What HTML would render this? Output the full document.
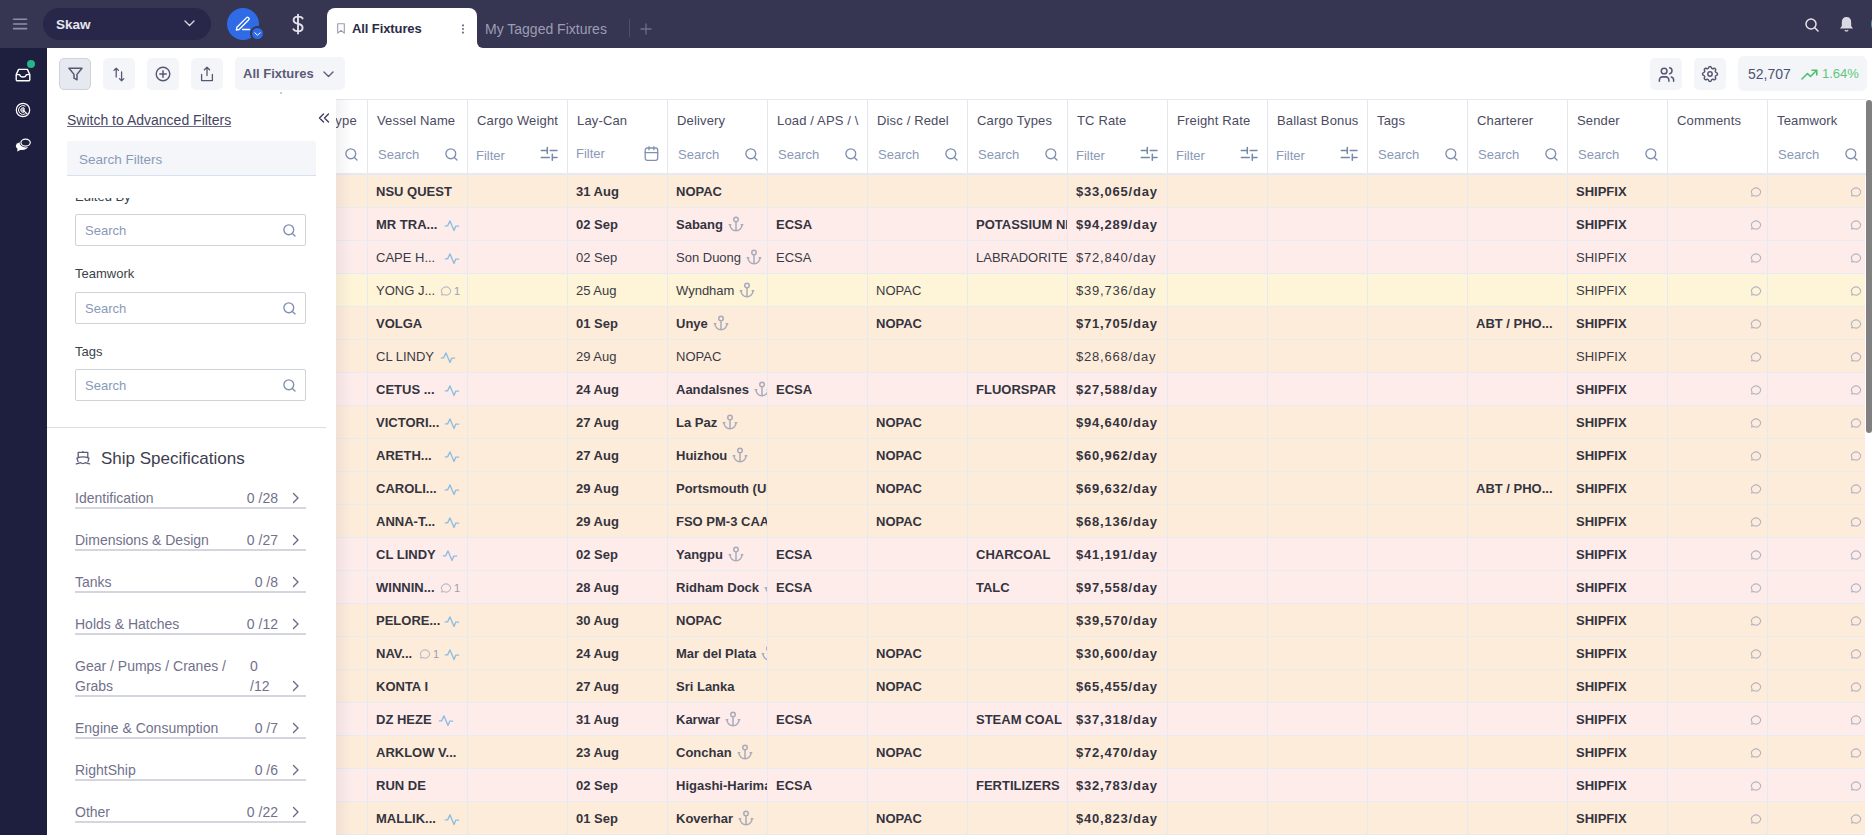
<!DOCTYPE html><html><head><meta charset="utf-8"><style>
*{box-sizing:border-box;margin:0;padding:0}
html,body{width:1872px;height:835px;overflow:hidden;background:#fff;font-family:"Liberation Sans", sans-serif;}
.abs{position:absolute}
.abs>svg,.tbtn>svg{display:block}
#top{position:absolute;left:0;top:0;width:1872px;height:48px;background:#363552}
#rail{position:absolute;left:0;top:48px;width:47px;height:787px;background:#1e1e3e}
.tbtn{position:absolute;top:58px;width:32px;height:32px;border-radius:5px;background:#f4f5f9;display:flex;align-items:center;justify-content:center}
.lbl{position:absolute;font-size:13px;color:#3c3f48;line-height:15px;white-space:nowrap}
.inp{position:absolute;left:75px;width:231px;height:32px;border:1px solid #cfd2d9;border-radius:2px;background:#fff}
.inp span{position:absolute;left:9px;top:8px;font-size:13px;line-height:15px;color:#8899b7}
.inp svg{position:absolute;right:9px;top:9px}
.spec{position:absolute;left:75px;width:231px;border-bottom:2px solid #d5d5df;font-size:14px;color:#72718c;line-height:20px}
.spec .n{position:absolute;right:28px;top:0;text-align:left}
.spec svg{position:absolute;right:5px}
#tbl{position:absolute;left:336px;top:99px;width:1530px;height:736px;overflow:hidden}
.hdr{position:absolute;left:0;top:0;width:1530px;height:76px;border-top:1px solid #e6e9f0;border-bottom:2px solid #e6e9f0;background:#fff}
.hc{position:absolute;top:0;height:73px;border-left:1px solid #e3e7ee}
.hc .t{position:absolute;left:9px;top:13px;font-size:13px;line-height:15px;color:#4b4b5f;white-space:nowrap;letter-spacing:0.15px}
.hc .p{position:absolute;left:10px;top:47px;font-size:13px;line-height:15px;color:#8a99b6;white-space:nowrap}
.hc svg{position:absolute}
.row{position:absolute;left:0;width:1529px;height:33px;border-bottom:1px solid #e8ebf0}
.o{background:#feecdb}
.k{background:#feeceb}
.y{background:#fef4d8}
.c{position:absolute;top:0;height:32px;border-left:1px solid #e6e9ef;overflow:hidden;white-space:nowrap;font-size:13px;line-height:34px;color:#3a3a44;padding-left:8px}
.b .c{font-weight:700;color:#34343e}
.c svg{vertical-align:middle}
.money{letter-spacing:0.8px}
</style></head><body><div id="top"><div class="abs" style="left:12px;top:17px"><svg width="16" height="14" viewBox="0 0 16 14" ><path d="M1.6 2.2H14.6 M1.6 7H14.6 M1.6 11.6H14.6" stroke="#8f8ea8" stroke-width="1.6" stroke-linecap="round"/></svg></div><div class="abs" style="left:43px;top:8px;width:168px;height:32px;border-radius:16px;background:#28274a"></div><div class="abs" style="left:56px;top:17px;font-size:13.5px;font-weight:700;color:#e6e6ee;line-height:16px">Skaw</div><div class="abs" style="left:184px;top:20px"><svg width="11" height="7" viewBox="0 0 11 7" ><path d="M1 1 L5.5 5.5 L10 1" fill="none" stroke="#d6d6e2" stroke-width="1.4" stroke-linecap="round" stroke-linejoin="round"/></svg></div><div class="abs" style="left:227px;top:8px;width:32px;height:32px;border-radius:16px;background:#306be6"></div><div class="abs" style="left:234px;top:15px"><svg width="18" height="18" viewBox="0 0 18 18" ><path d="M2.4 15 L2.9 12.3 L12.6 2.6 A1.3 1.3 0 0 1 14.4 2.6 L14.8 3 A1.3 1.3 0 0 1 14.8 4.8 L5.1 14.5 Z M8.6 14.5 H15.6" fill="none" stroke="#ffffff" stroke-width="1.3" stroke-linejoin="round" stroke-linecap="round"/></svg></div><div class="abs" style="left:250px;top:26px;width:15px;height:15px;border-radius:8px;background:#306be6;border:2px solid #363552"></div><div class="abs" style="left:254px;top:32px"><svg width="7" height="4" viewBox="0 0 7 4" ><path d="M0.8 0.8 L3.5 3.2 L6.2 0.8" fill="none" stroke="#fff" stroke-width="1" stroke-linecap="round"/></svg></div><div class="abs" style="left:291px;top:13px"><svg width="14" height="22" viewBox="0 0 14 22" ><path d="M7 1.6V20.6 M11.6 5.4 Q10.6 3.6 7.2 3.6 Q2.6 3.6 2.6 7 Q2.6 9.8 7 10.8 Q11.6 11.8 11.6 14.7 Q11.6 18.2 7 18.2 Q3.6 18.2 2.4 16.2" fill="none" stroke="#e2e2ea" stroke-width="1.9" stroke-linecap="round"/></svg></div></div><div class="abs" style="left:321px;top:42px;width:6px;height:6px;background:#fff"></div><div class="abs" style="left:315px;top:36px;width:12px;height:12px;border-radius:0 0 6px 0;background:#363552"></div><div class="abs" style="left:477px;top:42px;width:6px;height:6px;background:#fff"></div><div class="abs" style="left:477px;top:36px;width:12px;height:12px;border-radius:0 0 0 6px;background:#363552"></div><div class="abs" style="left:327px;top:8px;width:150px;height:41px;border-radius:8px 8px 0 0;background:#fff"></div><div class="abs" style="left:337px;top:23px"><svg width="8" height="11" viewBox="0 0 8 11" ><path d="M0.7 0.7H7.3V10.2L4 7.4L0.7 10.2Z" fill="none" stroke="#9a9aae" stroke-width="1.1" stroke-linejoin="round"/></svg></div><div class="abs" style="left:352px;top:21px;font-size:13px;font-weight:700;color:#2c2c46;line-height:16px;letter-spacing:-0.1px">All Fixtures</div><div class="abs" style="left:461px;top:24px"><svg width="4" height="10" viewBox="0 0 4 10" ><circle cx="2" cy="1.4" r="1.1" fill="#6b7890"/><circle cx="2" cy="5" r="1.1" fill="#6b7890"/><circle cx="2" cy="8.6" r="1.1" fill="#6b7890"/></svg></div><div class="abs" style="left:485px;top:21px;font-size:14px;color:#9d9db4;line-height:16px">My Tagged Fixtures</div><div class="abs" style="left:629px;top:19px;width:1px;height:18px;background:#4f4e6a"></div><div class="abs" style="left:640px;top:23px"><svg width="12" height="12" viewBox="0 0 12 12" ><path d="M6 1V11 M1 6H11" stroke="#6f6e88" stroke-width="1.3" stroke-linecap="round"/></svg></div><div class="abs" style="left:1805px;top:18px"><svg width="14" height="14" viewBox="0 0 14 14" ><circle cx="6" cy="6" r="5" fill="none" stroke="#e3e3ea" stroke-width="1.5"/><path d="M9.8 9.8 L13 13" stroke="#e3e3ea" stroke-width="1.5" stroke-linecap="round"/></svg></div><div class="abs" style="left:1839px;top:16px"><svg width="15" height="16" viewBox="0 0 15 16" ><path d="M7.5 1 Q12.2 1 12.2 6.5 V10 L14 12.4 H1 L2.8 10 V6.5 Q2.8 1 7.5 1 Z" fill="#d9d9e2"/><path d="M5.8 14.2 Q7.5 15.6 9.2 14.2" stroke="#d9d9e2" stroke-width="1.2" fill="none"/></svg></div><div class="abs" style="left:1871px;top:13px;width:22px;height:22px;border-radius:11px;background:#5b98a2"></div><div id="rail"></div><div class="abs" style="left:15px;top:68px"><svg width="16" height="14" viewBox="0 0 16 14" ><path d="M1.2 6.6 L3.6 1.4 H12.4 L14.8 6.6 V11.6 A1.2 1.2 0 0 1 13.6 12.8 H2.4 A1.2 1.2 0 0 1 1.2 11.6 Z M1.2 6.6 H4.6 Q5.2 9 8 9 Q10.8 9 11.4 6.6 H14.8" fill="none" stroke="#fff" stroke-width="1.4" stroke-linejoin="round"/></svg></div><div class="abs" style="left:27px;top:60px;width:8px;height:8px;border-radius:4px;background:#25b48b"></div><div class="abs" style="left:15px;top:102px"><svg width="16" height="16" viewBox="0 0 16 16" ><circle cx="8" cy="8" r="6.7" fill="none" stroke="#fff" stroke-width="1.2"/><path d="M10.5 4.27 A4.5 4.5 0 1 0 10.58 11.69" fill="none" stroke="#fff" stroke-width="1"/><path d="M9.15 6 A2.3 2.3 0 1 0 9.15 10 Z" fill="#8a8aa6" stroke="#fff" stroke-width="0.9"/><path d="M8 8 L11.9 11.7" stroke="#fff" stroke-width="1.1" stroke-linecap="round"/></svg></div><div class="abs" style="left:15px;top:137px"><svg width="18" height="16" viewBox="0 0 18 16" ><ellipse cx="7" cy="9" rx="6.2" ry="4" fill="#fff"/><path d="M2.6 11 L2.2 14.6 L6.4 12.6 Z" fill="#fff"/><ellipse cx="10.6" cy="5.6" rx="4.7" ry="3.5" fill="#1e1e3e" stroke="#1e1e3e" stroke-width="2.6"/><ellipse cx="10.6" cy="5.6" rx="4.7" ry="3.5" fill="#1e1e3e" stroke="#fff" stroke-width="1.2"/></svg></div><div class="tbtn" style="left:59px;background:#e6e9ef;border:1px solid #cdd2dc"><svg width="15" height="14" viewBox="0 0 15 14" ><path d="M1 1.2 H14 L9 7.4 V12.8 L6 11.2 V7.4 Z" fill="none" stroke="#585773" stroke-width="1.5" stroke-linejoin="round"/></svg></div><div class="tbtn" style="left:103px"><svg width="14" height="15" viewBox="0 0 14 15" ><path d="M4.2 10 V1.2 M2 3.4 L4.2 1.2 L6.4 3.4 M9.6 5 V13.8 M7.4 11.6 L9.6 13.8 L11.8 11.6" fill="none" stroke="#585773" stroke-width="1.3" stroke-linecap="round" stroke-linejoin="round"/></svg></div><div class="tbtn" style="left:147px"><svg width="16" height="16" viewBox="0 0 16 16" ><circle cx="8" cy="8" r="6.8" fill="none" stroke="#585773" stroke-width="1.4"/><path d="M8 4.8 V11.2 M4.8 8 H11.2" stroke="#585773" stroke-width="1.5" stroke-linecap="round"/></svg></div><div class="tbtn" style="left:191px"><svg width="14" height="16" viewBox="0 0 14 16" ><path d="M7 9.5 V1.2 M4.4 3.8 L7 1.2 L9.6 3.8 M1.6 8.4 V14.6 H12.4 V8.4" fill="none" stroke="#585773" stroke-width="1.3" stroke-linecap="round" stroke-linejoin="round"/></svg></div><div class="abs" style="left:235px;top:57px;width:110px;height:33px;border-radius:5px;background:#f4f5f9"></div><div class="abs" style="left:243px;top:66px;font-size:13px;font-weight:700;color:#5c5b78;line-height:16px">All Fixtures</div><div class="abs" style="left:323px;top:71px"><svg width="11" height="7" viewBox="0 0 11 7" ><path d="M1 1 L5.5 5.5 L10 1" fill="none" stroke="#5c5b78" stroke-width="1.4" stroke-linecap="round" stroke-linejoin="round"/></svg></div><div class="tbtn" style="left:1650px"><svg width="19" height="19" viewBox="0 0 24 24" style="display:block;margin-left:1px"><g fill="none" stroke="#585773" stroke-width="1.9" stroke-linecap="round" stroke-linejoin="round"><circle cx="9" cy="7.6" r="3.6"/><path d="M3 20.5v-1.5a4 4 0 0 1 4 -4h4a4 4 0 0 1 4 4v1.5"/><path d="M16 3.6a3.8 3.8 0 0 1 0 7.4"/><path d="M21 20.5v-1.5a4 4 0 0 0 -3 -3.85"/></g></svg></div><div class="tbtn" style="left:1694px"><svg width="20" height="20" viewBox="0 0 24 24" style="display:block"><g fill="none" stroke="#585773" stroke-width="1.8" stroke-linecap="round" stroke-linejoin="round"><path d="M10.325 4.317c.426 -1.756 2.924 -1.756 3.35 0a1.724 1.724 0 0 0 2.573 1.066c1.543 -.94 3.31 .826 2.37 2.37a1.724 1.724 0 0 0 1.065 2.572c1.756 .426 1.756 2.924 0 3.35a1.724 1.724 0 0 0 -1.066 2.573c.94 1.543 -.826 3.31 -2.37 2.37a1.724 1.724 0 0 0 -2.572 1.065c-.426 1.756 -2.924 1.756 -3.35 0a1.724 1.724 0 0 0 -2.573 -1.066c-1.543 .94 -3.31 -.826 -2.37 -2.37a1.724 1.724 0 0 0 -1.065 -2.572c-1.756 -.426 -1.756 -2.924 0 -3.35a1.724 1.724 0 0 0 1.066 -2.573c-.94 -1.543 .826 -3.31 2.37 -2.37c1 .608 2.296 .07 2.572 -1.065z"/><circle cx="12" cy="12" r="2.6"/></g></svg></div><div class="abs" style="left:1738px;top:56px;width:129px;height:35px;border-radius:6px;background:#f4f5f9"></div><div class="abs" style="left:1748px;top:66px;font-size:14px;color:#4d5272;line-height:16px">52,707</div><div class="abs" style="left:1801px;top:69px"><svg width="17" height="11" viewBox="0 0 17 11" ><path d="M1 10 L6.5 4.5 L9.5 7.5 L15.5 1.5 M11 1.2 H15.8 V6" fill="none" stroke="#4fc16e" stroke-width="1.6" stroke-linecap="round" stroke-linejoin="round"/></svg></div><div class="abs" style="left:1822px;top:66px;font-size:13px;color:#5cc77b;line-height:16px">1.64%</div><div class="abs" style="left:280px;top:92px;width:2px;height:2px;border-radius:1px;background:#b9bac4"></div><div class="abs" style="left:67px;top:112px;font-size:14px;color:#454462;line-height:16px;text-decoration:underline;text-underline-offset:1px;text-decoration-color:#6a6985">Switch to Advanced Filters</div><div class="abs" style="left:318px;top:113px"><svg width="12" height="10" viewBox="0 0 12 10" ><path d="M5.5 1 L1.5 5 L5.5 9 M10.5 1 L6.5 5 L10.5 9" fill="none" stroke="#3e3d5a" stroke-width="1.4" stroke-linecap="round" stroke-linejoin="round"/></svg></div><div class="abs" style="left:67px;top:141px;width:249px;height:35px;background:#f4f6fa;border-bottom:1px solid #d5e1ee;border-radius:3px 3px 0 0"></div><div class="abs" style="left:79px;top:152px;font-size:13.5px;color:#8a9bb8;line-height:16px">Search Filters</div><div class="abs" style="left:47px;top:198px;width:289px;height:637px;overflow:hidden"><div class="lbl" style="left:28px;top:-9px">Edited By</div></div><div class="inp" style="top:214px"><span>Search</span><svg width="13" height="13" viewBox="0 0 13 13" ><circle cx="5.8" cy="5.8" r="4.9" fill="none" stroke="#7f8fb0" stroke-width="1.35"/><path d="M9.4 9.4 L12 12" stroke="#7f8fb0" stroke-width="1.35" stroke-linecap="round"/></svg></div><div class="inp" style="top:292px"><span>Search</span><svg width="13" height="13" viewBox="0 0 13 13" ><circle cx="5.8" cy="5.8" r="4.9" fill="none" stroke="#7f8fb0" stroke-width="1.35"/><path d="M9.4 9.4 L12 12" stroke="#7f8fb0" stroke-width="1.35" stroke-linecap="round"/></svg></div><div class="inp" style="top:369px"><span>Search</span><svg width="13" height="13" viewBox="0 0 13 13" ><circle cx="5.8" cy="5.8" r="4.9" fill="none" stroke="#7f8fb0" stroke-width="1.35"/><path d="M9.4 9.4 L12 12" stroke="#7f8fb0" stroke-width="1.35" stroke-linecap="round"/></svg></div><div class="lbl" style="left:75px;top:266px">Teamwork</div><div class="lbl" style="left:75px;top:344px">Tags</div><div class="abs" style="left:47px;top:427px;width:279px;height:1px;background:#dcdce4"></div><div class="abs" style="left:75px;top:449px"><svg width="16" height="16" viewBox="0 0 16 16" ><path d="M7.9 2.3 V3.2 M3.2 8 V3.3 H12.8 V8 M2 9.2 Q7.9 6.6 13.9 9.2 M2 9.2 L3 12.6 M13.9 9.2 L13 12.6 M1.3 14.9 Q3.4 14.6 5.4 13.6 Q7.9 15.6 10.5 13.6 Q12.5 14.6 14.6 14.9" fill="none" stroke="#5b5b7b" stroke-width="1.3" stroke-linejoin="round" stroke-linecap="round"/></svg></div><div class="abs" style="left:101px;top:449px;font-size:17px;color:#3d3d50;line-height:20px">Ship Specifications</div><div class="spec" style="top:488px;height:21px">Identification<span class="n">0 /28</span><span style="position:absolute;right:1px;top:4px;line-height:0"><svg width="8" height="12" viewBox="0 0 8 12" ><path d="M1.5 1.5 L6 6 L1.5 10.5" fill="none" stroke="#6b6b86" stroke-width="1.4" stroke-linecap="round" stroke-linejoin="round"/></svg></span></div><div class="spec" style="top:530px;height:21px">Dimensions &amp; Design<span class="n">0 /27</span><span style="position:absolute;right:1px;top:4px;line-height:0"><svg width="8" height="12" viewBox="0 0 8 12" ><path d="M1.5 1.5 L6 6 L1.5 10.5" fill="none" stroke="#6b6b86" stroke-width="1.4" stroke-linecap="round" stroke-linejoin="round"/></svg></span></div><div class="spec" style="top:572px;height:21px">Tanks<span class="n">0 /8</span><span style="position:absolute;right:1px;top:4px;line-height:0"><svg width="8" height="12" viewBox="0 0 8 12" ><path d="M1.5 1.5 L6 6 L1.5 10.5" fill="none" stroke="#6b6b86" stroke-width="1.4" stroke-linecap="round" stroke-linejoin="round"/></svg></span></div><div class="spec" style="top:614px;height:21px">Holds &amp; Hatches<span class="n">0 /12</span><span style="position:absolute;right:1px;top:4px;line-height:0"><svg width="8" height="12" viewBox="0 0 8 12" ><path d="M1.5 1.5 L6 6 L1.5 10.5" fill="none" stroke="#6b6b86" stroke-width="1.4" stroke-linecap="round" stroke-linejoin="round"/></svg></span></div><div class="spec" style="top:656px;height:41px">Gear / Pumps / Cranes /<br>Grabs<span class="n" style="right:auto;left:175px">0</span><span class="n" style="top:20px;right:auto;left:175px">/12</span><span style="position:absolute;right:1px;top:24px;line-height:0"><svg width="8" height="12" viewBox="0 0 8 12" ><path d="M1.5 1.5 L6 6 L1.5 10.5" fill="none" stroke="#6b6b86" stroke-width="1.4" stroke-linecap="round" stroke-linejoin="round"/></svg></span></div><div class="spec" style="top:718px;height:21px">Engine &amp; Consumption<span class="n">0 /7</span><span style="position:absolute;right:1px;top:4px;line-height:0"><svg width="8" height="12" viewBox="0 0 8 12" ><path d="M1.5 1.5 L6 6 L1.5 10.5" fill="none" stroke="#6b6b86" stroke-width="1.4" stroke-linecap="round" stroke-linejoin="round"/></svg></span></div><div class="spec" style="top:760px;height:21px">RightShip<span class="n">0 /6</span><span style="position:absolute;right:1px;top:4px;line-height:0"><svg width="8" height="12" viewBox="0 0 8 12" ><path d="M1.5 1.5 L6 6 L1.5 10.5" fill="none" stroke="#6b6b86" stroke-width="1.4" stroke-linecap="round" stroke-linejoin="round"/></svg></span></div><div class="spec" style="top:802px;height:21px">Other<span class="n">0 /22</span><span style="position:absolute;right:1px;top:4px;line-height:0"><svg width="8" height="12" viewBox="0 0 8 12" ><path d="M1.5 1.5 L6 6 L1.5 10.5" fill="none" stroke="#6b6b86" stroke-width="1.4" stroke-linecap="round" stroke-linejoin="round"/></svg></span></div><div id="tbl"><div class="hdr"><div class="hc" style="left:0px;width:31px;border-left:none"><div class="t" style="left:-8px">Type</div><div style="position:absolute;left:9px;top:48px;line-height:0"><svg width="13" height="13" viewBox="0 0 13 13" ><circle cx="5.8" cy="5.8" r="4.9" fill="none" stroke="#7f8fb0" stroke-width="1.35"/><path d="M9.4 9.4 L12 12" stroke="#7f8fb0" stroke-width="1.35" stroke-linecap="round"/></svg></div></div><div class="hc" style="left:31px;width:100px"><div class="t">Vessel Name</div><div class="p" style="left:10px">Search</div><div style="position:absolute;left:77px;top:48px;line-height:0"><svg width="13" height="13" viewBox="0 0 13 13" ><circle cx="5.8" cy="5.8" r="4.9" fill="none" stroke="#7f8fb0" stroke-width="1.35"/><path d="M9.4 9.4 L12 12" stroke="#7f8fb0" stroke-width="1.35" stroke-linecap="round"/></svg></div></div><div class="hc" style="left:131px;width:100px"><div class="t">Cargo Weight</div><div class="p" style="left:8px;top:48px">Filter</div><div style="position:absolute;left:72px;top:46px;line-height:0"><svg width="18" height="15" viewBox="0 0 18 15" ><path d="M1.3 4.6H7.3 M7.3 1.4V7.5 M10.2 4.6H17 M1.3 11.4H9.4 M12.3 8.2V14.2 M12.3 11.4H17" stroke="#7488aa" stroke-width="1.5" fill="none" stroke-linecap="round"/></svg></div></div><div class="hc" style="left:231px;width:100px"><div class="t">Lay-Can</div><div class="p" style="left:8px;top:45.5px">Filter</div><div style="position:absolute;left:75.5px;top:46px;line-height:0"><svg width="15" height="15" viewBox="0 0 15 15" ><rect x="1.2" y="2" width="12.5" height="12.3" rx="2" fill="none" stroke="#7f92b0" stroke-width="1.3"/><path d="M1.2 6.7H13.7 M5 0.7V3.8 M9.9 0.7V3.8" stroke="#7f92b0" stroke-width="1.3" stroke-linecap="round"/></svg></div></div><div class="hc" style="left:331px;width:100px"><div class="t">Delivery</div><div class="p" style="left:10px">Search</div><div style="position:absolute;left:77px;top:48px;line-height:0"><svg width="13" height="13" viewBox="0 0 13 13" ><circle cx="5.8" cy="5.8" r="4.9" fill="none" stroke="#7f8fb0" stroke-width="1.35"/><path d="M9.4 9.4 L12 12" stroke="#7f8fb0" stroke-width="1.35" stroke-linecap="round"/></svg></div></div><div class="hc" style="left:431px;width:100px"><div class="t">Load / APS / \</div><div class="p" style="left:10px">Search</div><div style="position:absolute;left:77px;top:48px;line-height:0"><svg width="13" height="13" viewBox="0 0 13 13" ><circle cx="5.8" cy="5.8" r="4.9" fill="none" stroke="#7f8fb0" stroke-width="1.35"/><path d="M9.4 9.4 L12 12" stroke="#7f8fb0" stroke-width="1.35" stroke-linecap="round"/></svg></div></div><div class="hc" style="left:531px;width:100px"><div class="t">Disc / Redel</div><div class="p" style="left:10px">Search</div><div style="position:absolute;left:77px;top:48px;line-height:0"><svg width="13" height="13" viewBox="0 0 13 13" ><circle cx="5.8" cy="5.8" r="4.9" fill="none" stroke="#7f8fb0" stroke-width="1.35"/><path d="M9.4 9.4 L12 12" stroke="#7f8fb0" stroke-width="1.35" stroke-linecap="round"/></svg></div></div><div class="hc" style="left:631px;width:100px"><div class="t">Cargo Types</div><div class="p" style="left:10px">Search</div><div style="position:absolute;left:77px;top:48px;line-height:0"><svg width="13" height="13" viewBox="0 0 13 13" ><circle cx="5.8" cy="5.8" r="4.9" fill="none" stroke="#7f8fb0" stroke-width="1.35"/><path d="M9.4 9.4 L12 12" stroke="#7f8fb0" stroke-width="1.35" stroke-linecap="round"/></svg></div></div><div class="hc" style="left:731px;width:100px"><div class="t">TC Rate</div><div class="p" style="left:8px;top:48px">Filter</div><div style="position:absolute;left:72px;top:46px;line-height:0"><svg width="18" height="15" viewBox="0 0 18 15" ><path d="M1.3 4.6H7.3 M7.3 1.4V7.5 M10.2 4.6H17 M1.3 11.4H9.4 M12.3 8.2V14.2 M12.3 11.4H17" stroke="#7488aa" stroke-width="1.5" fill="none" stroke-linecap="round"/></svg></div></div><div class="hc" style="left:831px;width:100px"><div class="t">Freight Rate</div><div class="p" style="left:8px;top:48px">Filter</div><div style="position:absolute;left:72px;top:46px;line-height:0"><svg width="18" height="15" viewBox="0 0 18 15" ><path d="M1.3 4.6H7.3 M7.3 1.4V7.5 M10.2 4.6H17 M1.3 11.4H9.4 M12.3 8.2V14.2 M12.3 11.4H17" stroke="#7488aa" stroke-width="1.5" fill="none" stroke-linecap="round"/></svg></div></div><div class="hc" style="left:931px;width:100px"><div class="t">Ballast Bonus</div><div class="p" style="left:8px;top:48px">Filter</div><div style="position:absolute;left:72px;top:46px;line-height:0"><svg width="18" height="15" viewBox="0 0 18 15" ><path d="M1.3 4.6H7.3 M7.3 1.4V7.5 M10.2 4.6H17 M1.3 11.4H9.4 M12.3 8.2V14.2 M12.3 11.4H17" stroke="#7488aa" stroke-width="1.5" fill="none" stroke-linecap="round"/></svg></div></div><div class="hc" style="left:1031px;width:100px"><div class="t">Tags</div><div class="p" style="left:10px">Search</div><div style="position:absolute;left:77px;top:48px;line-height:0"><svg width="13" height="13" viewBox="0 0 13 13" ><circle cx="5.8" cy="5.8" r="4.9" fill="none" stroke="#7f8fb0" stroke-width="1.35"/><path d="M9.4 9.4 L12 12" stroke="#7f8fb0" stroke-width="1.35" stroke-linecap="round"/></svg></div></div><div class="hc" style="left:1131px;width:100px"><div class="t">Charterer</div><div class="p" style="left:10px">Search</div><div style="position:absolute;left:77px;top:48px;line-height:0"><svg width="13" height="13" viewBox="0 0 13 13" ><circle cx="5.8" cy="5.8" r="4.9" fill="none" stroke="#7f8fb0" stroke-width="1.35"/><path d="M9.4 9.4 L12 12" stroke="#7f8fb0" stroke-width="1.35" stroke-linecap="round"/></svg></div></div><div class="hc" style="left:1231px;width:100px"><div class="t">Sender</div><div class="p" style="left:10px">Search</div><div style="position:absolute;left:77px;top:48px;line-height:0"><svg width="13" height="13" viewBox="0 0 13 13" ><circle cx="5.8" cy="5.8" r="4.9" fill="none" stroke="#7f8fb0" stroke-width="1.35"/><path d="M9.4 9.4 L12 12" stroke="#7f8fb0" stroke-width="1.35" stroke-linecap="round"/></svg></div></div><div class="hc" style="left:1331px;width:100px"><div class="t">Comments</div></div><div class="hc" style="left:1431px;width:100px"><div class="t">Teamwork</div><div class="p" style="left:10px">Search</div><div style="position:absolute;left:77px;top:48px;line-height:0"><svg width="13" height="13" viewBox="0 0 13 13" ><circle cx="5.8" cy="5.8" r="4.9" fill="none" stroke="#7f8fb0" stroke-width="1.35"/><path d="M9.4 9.4 L12 12" stroke="#7f8fb0" stroke-width="1.35" stroke-linecap="round"/></svg></div></div></div><div class="row o b" style="top:76px"><div class="c" style="left:0px;width:31px;border-left:none"></div><div class="c" style="left:31px;width:100px">NSU QUEST</div><div class="c" style="left:131px;width:100px"></div><div class="c" style="left:231px;width:100px">31 Aug</div><div class="c" style="left:331px;width:100px">NOPAC</div><div class="c" style="left:431px;width:100px"></div><div class="c" style="left:531px;width:100px"></div><div class="c" style="left:631px;width:100px"></div><div class="c" style="left:731px;width:100px"><span class="money">$33,065/day</span></div><div class="c" style="left:831px;width:100px"></div><div class="c" style="left:931px;width:100px"></div><div class="c" style="left:1031px;width:100px"></div><div class="c" style="left:1131px;width:100px"></div><div class="c" style="left:1231px;width:100px">SHIPFIX</div><div class="c" style="left:1331px;width:100px"><span style="position:absolute;right:5px;top:11px;line-height:0"><svg width="12" height="12" viewBox="0 0 24 24"><path d="M3 20l1.3 -3.9c-2.324 -3.437 -1.426 -7.872 2.1 -10.374c3.526 -2.501 8.59 -2.296 11.845 .48c3.255 2.777 3.695 7.266 1.029 10.501c-2.666 3.235 -7.615 4.215 -11.574 2.293l-4.7 1" fill="none" stroke="#b4b5c2" stroke-width="2.2" stroke-linecap="round" stroke-linejoin="round"/></svg></span></div><div class="c" style="left:1431px;width:100px"><span style="position:absolute;right:5px;top:11px;line-height:0"><svg width="12" height="12" viewBox="0 0 24 24"><path d="M3 20l1.3 -3.9c-2.324 -3.437 -1.426 -7.872 2.1 -10.374c3.526 -2.501 8.59 -2.296 11.845 .48c3.255 2.777 3.695 7.266 1.029 10.501c-2.666 3.235 -7.615 4.215 -11.574 2.293l-4.7 1" fill="none" stroke="#b4b5c2" stroke-width="2.2" stroke-linecap="round" stroke-linejoin="round"/></svg></span></div></div><div class="row k b" style="top:109px"><div class="c" style="left:0px;width:31px;border-left:none"></div><div class="c" style="left:31px;width:100px"><span style="display:inline-block;vertical-align:top">MR TRA...</span><span style="position:absolute;right:7px;top:0;height:32px;line-height:34px"><span style="display:inline-block;vertical-align:middle;margin-left:5px;line-height:0"><svg width="16" height="14" viewBox="0 0 16 14" ><path d="M1.3 6.9 H3.6 L6 1.9 L10 11.5 L11.8 7.1 H14.7" fill="none" stroke="#8dbde0" stroke-width="1.35" stroke-linejoin="round" stroke-linecap="round"/></svg></span></span></div><div class="c" style="left:131px;width:100px"></div><div class="c" style="left:231px;width:100px">02 Sep</div><div class="c" style="left:331px;width:100px">Sabang<span style="display:inline-block;vertical-align:middle;margin-left:4px;line-height:0;position:relative;top:-2px"><svg width="18" height="18" viewBox="0 0 24 24"><g fill="none" stroke="#a9abbb" stroke-width="2" stroke-linecap="round" stroke-linejoin="round"><path d="M12 9v12m-8 -8a8 8 0 0 0 16 0m1 0h-2m-14 0h-2"/><circle cx="12" cy="6" r="3"/></g></svg></span></div><div class="c" style="left:431px;width:100px">ECSA</div><div class="c" style="left:531px;width:100px"></div><div class="c" style="left:631px;width:100px">POTASSIUM NI</div><div class="c" style="left:731px;width:100px"><span class="money">$94,289/day</span></div><div class="c" style="left:831px;width:100px"></div><div class="c" style="left:931px;width:100px"></div><div class="c" style="left:1031px;width:100px"></div><div class="c" style="left:1131px;width:100px"></div><div class="c" style="left:1231px;width:100px">SHIPFIX</div><div class="c" style="left:1331px;width:100px"><span style="position:absolute;right:5px;top:11px;line-height:0"><svg width="12" height="12" viewBox="0 0 24 24"><path d="M3 20l1.3 -3.9c-2.324 -3.437 -1.426 -7.872 2.1 -10.374c3.526 -2.501 8.59 -2.296 11.845 .48c3.255 2.777 3.695 7.266 1.029 10.501c-2.666 3.235 -7.615 4.215 -11.574 2.293l-4.7 1" fill="none" stroke="#b4b5c2" stroke-width="2.2" stroke-linecap="round" stroke-linejoin="round"/></svg></span></div><div class="c" style="left:1431px;width:100px"><span style="position:absolute;right:5px;top:11px;line-height:0"><svg width="12" height="12" viewBox="0 0 24 24"><path d="M3 20l1.3 -3.9c-2.324 -3.437 -1.426 -7.872 2.1 -10.374c3.526 -2.501 8.59 -2.296 11.845 .48c3.255 2.777 3.695 7.266 1.029 10.501c-2.666 3.235 -7.615 4.215 -11.574 2.293l-4.7 1" fill="none" stroke="#b4b5c2" stroke-width="2.2" stroke-linecap="round" stroke-linejoin="round"/></svg></span></div></div><div class="row k" style="top:142px"><div class="c" style="left:0px;width:31px;border-left:none"></div><div class="c" style="left:31px;width:100px"><span style="display:inline-block;vertical-align:top">CAPE H...</span><span style="position:absolute;right:7px;top:0;height:32px;line-height:34px"><span style="display:inline-block;vertical-align:middle;margin-left:5px;line-height:0"><svg width="16" height="14" viewBox="0 0 16 14" ><path d="M1.3 6.9 H3.6 L6 1.9 L10 11.5 L11.8 7.1 H14.7" fill="none" stroke="#8dbde0" stroke-width="1.35" stroke-linejoin="round" stroke-linecap="round"/></svg></span></span></div><div class="c" style="left:131px;width:100px"></div><div class="c" style="left:231px;width:100px">02 Sep</div><div class="c" style="left:331px;width:100px">Son Duong<span style="display:inline-block;vertical-align:middle;margin-left:4px;line-height:0;position:relative;top:-2px"><svg width="18" height="18" viewBox="0 0 24 24"><g fill="none" stroke="#a9abbb" stroke-width="2" stroke-linecap="round" stroke-linejoin="round"><path d="M12 9v12m-8 -8a8 8 0 0 0 16 0m1 0h-2m-14 0h-2"/><circle cx="12" cy="6" r="3"/></g></svg></span></div><div class="c" style="left:431px;width:100px">ECSA</div><div class="c" style="left:531px;width:100px"></div><div class="c" style="left:631px;width:100px">LABRADORITE</div><div class="c" style="left:731px;width:100px"><span class="money">$72,840/day</span></div><div class="c" style="left:831px;width:100px"></div><div class="c" style="left:931px;width:100px"></div><div class="c" style="left:1031px;width:100px"></div><div class="c" style="left:1131px;width:100px"></div><div class="c" style="left:1231px;width:100px">SHIPFIX</div><div class="c" style="left:1331px;width:100px"><span style="position:absolute;right:5px;top:11px;line-height:0"><svg width="12" height="12" viewBox="0 0 24 24"><path d="M3 20l1.3 -3.9c-2.324 -3.437 -1.426 -7.872 2.1 -10.374c3.526 -2.501 8.59 -2.296 11.845 .48c3.255 2.777 3.695 7.266 1.029 10.501c-2.666 3.235 -7.615 4.215 -11.574 2.293l-4.7 1" fill="none" stroke="#b4b5c2" stroke-width="2.2" stroke-linecap="round" stroke-linejoin="round"/></svg></span></div><div class="c" style="left:1431px;width:100px"><span style="position:absolute;right:5px;top:11px;line-height:0"><svg width="12" height="12" viewBox="0 0 24 24"><path d="M3 20l1.3 -3.9c-2.324 -3.437 -1.426 -7.872 2.1 -10.374c3.526 -2.501 8.59 -2.296 11.845 .48c3.255 2.777 3.695 7.266 1.029 10.501c-2.666 3.235 -7.615 4.215 -11.574 2.293l-4.7 1" fill="none" stroke="#b4b5c2" stroke-width="2.2" stroke-linecap="round" stroke-linejoin="round"/></svg></span></div></div><div class="row y" style="top:175px"><div class="c" style="left:0px;width:31px;border-left:none"></div><div class="c" style="left:31px;width:100px"><span style="display:inline-block;vertical-align:top">YONG J...</span><span style="position:absolute;right:7px;top:0;height:32px;line-height:34px"><span style="display:inline-block;vertical-align:middle;color:#9a9eb4;font-size:11px;font-weight:400;line-height:12px;position:relative;top:-1px"><svg width="12" height="12" viewBox="0 0 24 24" style="vertical-align:middle"><path d="M3 20l1.3 -3.9c-2.324 -3.437 -1.426 -7.872 2.1 -10.374c3.526 -2.501 8.59 -2.296 11.845 .48c3.255 2.777 3.695 7.266 1.029 10.501c-2.666 3.235 -7.615 4.215 -11.574 2.293l-4.7 1" fill="none" stroke="#bdbcc6" stroke-width="2.2" stroke-linecap="round" stroke-linejoin="round"/></svg><span style="vertical-align:middle;margin-left:2px">1</span></span></span></div><div class="c" style="left:131px;width:100px"></div><div class="c" style="left:231px;width:100px">25 Aug</div><div class="c" style="left:331px;width:100px">Wyndham<span style="display:inline-block;vertical-align:middle;margin-left:4px;line-height:0;position:relative;top:-2px"><svg width="18" height="18" viewBox="0 0 24 24"><g fill="none" stroke="#a9abbb" stroke-width="2" stroke-linecap="round" stroke-linejoin="round"><path d="M12 9v12m-8 -8a8 8 0 0 0 16 0m1 0h-2m-14 0h-2"/><circle cx="12" cy="6" r="3"/></g></svg></span></div><div class="c" style="left:431px;width:100px"></div><div class="c" style="left:531px;width:100px">NOPAC</div><div class="c" style="left:631px;width:100px"></div><div class="c" style="left:731px;width:100px"><span class="money">$39,736/day</span></div><div class="c" style="left:831px;width:100px"></div><div class="c" style="left:931px;width:100px"></div><div class="c" style="left:1031px;width:100px"></div><div class="c" style="left:1131px;width:100px"></div><div class="c" style="left:1231px;width:100px">SHIPFIX</div><div class="c" style="left:1331px;width:100px"><span style="position:absolute;right:5px;top:11px;line-height:0"><svg width="12" height="12" viewBox="0 0 24 24"><path d="M3 20l1.3 -3.9c-2.324 -3.437 -1.426 -7.872 2.1 -10.374c3.526 -2.501 8.59 -2.296 11.845 .48c3.255 2.777 3.695 7.266 1.029 10.501c-2.666 3.235 -7.615 4.215 -11.574 2.293l-4.7 1" fill="none" stroke="#b4b5c2" stroke-width="2.2" stroke-linecap="round" stroke-linejoin="round"/></svg></span></div><div class="c" style="left:1431px;width:100px"><span style="position:absolute;right:5px;top:11px;line-height:0"><svg width="12" height="12" viewBox="0 0 24 24"><path d="M3 20l1.3 -3.9c-2.324 -3.437 -1.426 -7.872 2.1 -10.374c3.526 -2.501 8.59 -2.296 11.845 .48c3.255 2.777 3.695 7.266 1.029 10.501c-2.666 3.235 -7.615 4.215 -11.574 2.293l-4.7 1" fill="none" stroke="#b4b5c2" stroke-width="2.2" stroke-linecap="round" stroke-linejoin="round"/></svg></span></div></div><div class="row o b" style="top:208px"><div class="c" style="left:0px;width:31px;border-left:none"></div><div class="c" style="left:31px;width:100px">VOLGA</div><div class="c" style="left:131px;width:100px"></div><div class="c" style="left:231px;width:100px">01 Sep</div><div class="c" style="left:331px;width:100px">Unye<span style="display:inline-block;vertical-align:middle;margin-left:4px;line-height:0;position:relative;top:-2px"><svg width="18" height="18" viewBox="0 0 24 24"><g fill="none" stroke="#a9abbb" stroke-width="2" stroke-linecap="round" stroke-linejoin="round"><path d="M12 9v12m-8 -8a8 8 0 0 0 16 0m1 0h-2m-14 0h-2"/><circle cx="12" cy="6" r="3"/></g></svg></span></div><div class="c" style="left:431px;width:100px"></div><div class="c" style="left:531px;width:100px">NOPAC</div><div class="c" style="left:631px;width:100px"></div><div class="c" style="left:731px;width:100px"><span class="money">$71,705/day</span></div><div class="c" style="left:831px;width:100px"></div><div class="c" style="left:931px;width:100px"></div><div class="c" style="left:1031px;width:100px"></div><div class="c" style="left:1131px;width:100px">ABT / PHO...</div><div class="c" style="left:1231px;width:100px">SHIPFIX</div><div class="c" style="left:1331px;width:100px"><span style="position:absolute;right:5px;top:11px;line-height:0"><svg width="12" height="12" viewBox="0 0 24 24"><path d="M3 20l1.3 -3.9c-2.324 -3.437 -1.426 -7.872 2.1 -10.374c3.526 -2.501 8.59 -2.296 11.845 .48c3.255 2.777 3.695 7.266 1.029 10.501c-2.666 3.235 -7.615 4.215 -11.574 2.293l-4.7 1" fill="none" stroke="#b4b5c2" stroke-width="2.2" stroke-linecap="round" stroke-linejoin="round"/></svg></span></div><div class="c" style="left:1431px;width:100px"><span style="position:absolute;right:5px;top:11px;line-height:0"><svg width="12" height="12" viewBox="0 0 24 24"><path d="M3 20l1.3 -3.9c-2.324 -3.437 -1.426 -7.872 2.1 -10.374c3.526 -2.501 8.59 -2.296 11.845 .48c3.255 2.777 3.695 7.266 1.029 10.501c-2.666 3.235 -7.615 4.215 -11.574 2.293l-4.7 1" fill="none" stroke="#b4b5c2" stroke-width="2.2" stroke-linecap="round" stroke-linejoin="round"/></svg></span></div></div><div class="row o" style="top:241px"><div class="c" style="left:0px;width:31px;border-left:none"></div><div class="c" style="left:31px;width:100px">CL LINDY<span style="display:inline-block;vertical-align:middle;margin-left:6px;line-height:0"><svg width="16" height="14" viewBox="0 0 16 14" ><path d="M1.3 6.9 H3.6 L6 1.9 L10 11.5 L11.8 7.1 H14.7" fill="none" stroke="#8dbde0" stroke-width="1.35" stroke-linejoin="round" stroke-linecap="round"/></svg></span></div><div class="c" style="left:131px;width:100px"></div><div class="c" style="left:231px;width:100px">29 Aug</div><div class="c" style="left:331px;width:100px">NOPAC</div><div class="c" style="left:431px;width:100px"></div><div class="c" style="left:531px;width:100px"></div><div class="c" style="left:631px;width:100px"></div><div class="c" style="left:731px;width:100px"><span class="money">$28,668/day</span></div><div class="c" style="left:831px;width:100px"></div><div class="c" style="left:931px;width:100px"></div><div class="c" style="left:1031px;width:100px"></div><div class="c" style="left:1131px;width:100px"></div><div class="c" style="left:1231px;width:100px">SHIPFIX</div><div class="c" style="left:1331px;width:100px"><span style="position:absolute;right:5px;top:11px;line-height:0"><svg width="12" height="12" viewBox="0 0 24 24"><path d="M3 20l1.3 -3.9c-2.324 -3.437 -1.426 -7.872 2.1 -10.374c3.526 -2.501 8.59 -2.296 11.845 .48c3.255 2.777 3.695 7.266 1.029 10.501c-2.666 3.235 -7.615 4.215 -11.574 2.293l-4.7 1" fill="none" stroke="#b4b5c2" stroke-width="2.2" stroke-linecap="round" stroke-linejoin="round"/></svg></span></div><div class="c" style="left:1431px;width:100px"><span style="position:absolute;right:5px;top:11px;line-height:0"><svg width="12" height="12" viewBox="0 0 24 24"><path d="M3 20l1.3 -3.9c-2.324 -3.437 -1.426 -7.872 2.1 -10.374c3.526 -2.501 8.59 -2.296 11.845 .48c3.255 2.777 3.695 7.266 1.029 10.501c-2.666 3.235 -7.615 4.215 -11.574 2.293l-4.7 1" fill="none" stroke="#b4b5c2" stroke-width="2.2" stroke-linecap="round" stroke-linejoin="round"/></svg></span></div></div><div class="row k b" style="top:274px"><div class="c" style="left:0px;width:31px;border-left:none"></div><div class="c" style="left:31px;width:100px"><span style="display:inline-block;vertical-align:top">CETUS ...</span><span style="position:absolute;right:7px;top:0;height:32px;line-height:34px"><span style="display:inline-block;vertical-align:middle;margin-left:5px;line-height:0"><svg width="16" height="14" viewBox="0 0 16 14" ><path d="M1.3 6.9 H3.6 L6 1.9 L10 11.5 L11.8 7.1 H14.7" fill="none" stroke="#8dbde0" stroke-width="1.35" stroke-linejoin="round" stroke-linecap="round"/></svg></span></span></div><div class="c" style="left:131px;width:100px"></div><div class="c" style="left:231px;width:100px">24 Aug</div><div class="c" style="left:331px;width:100px">Aandalsnes<span style="display:inline-block;vertical-align:middle;margin-left:4px;line-height:0;position:relative;top:-2px"><svg width="18" height="18" viewBox="0 0 24 24"><g fill="none" stroke="#a9abbb" stroke-width="2" stroke-linecap="round" stroke-linejoin="round"><path d="M12 9v12m-8 -8a8 8 0 0 0 16 0m1 0h-2m-14 0h-2"/><circle cx="12" cy="6" r="3"/></g></svg></span></div><div class="c" style="left:431px;width:100px">ECSA</div><div class="c" style="left:531px;width:100px"></div><div class="c" style="left:631px;width:100px">FLUORSPAR</div><div class="c" style="left:731px;width:100px"><span class="money">$27,588/day</span></div><div class="c" style="left:831px;width:100px"></div><div class="c" style="left:931px;width:100px"></div><div class="c" style="left:1031px;width:100px"></div><div class="c" style="left:1131px;width:100px"></div><div class="c" style="left:1231px;width:100px">SHIPFIX</div><div class="c" style="left:1331px;width:100px"><span style="position:absolute;right:5px;top:11px;line-height:0"><svg width="12" height="12" viewBox="0 0 24 24"><path d="M3 20l1.3 -3.9c-2.324 -3.437 -1.426 -7.872 2.1 -10.374c3.526 -2.501 8.59 -2.296 11.845 .48c3.255 2.777 3.695 7.266 1.029 10.501c-2.666 3.235 -7.615 4.215 -11.574 2.293l-4.7 1" fill="none" stroke="#b4b5c2" stroke-width="2.2" stroke-linecap="round" stroke-linejoin="round"/></svg></span></div><div class="c" style="left:1431px;width:100px"><span style="position:absolute;right:5px;top:11px;line-height:0"><svg width="12" height="12" viewBox="0 0 24 24"><path d="M3 20l1.3 -3.9c-2.324 -3.437 -1.426 -7.872 2.1 -10.374c3.526 -2.501 8.59 -2.296 11.845 .48c3.255 2.777 3.695 7.266 1.029 10.501c-2.666 3.235 -7.615 4.215 -11.574 2.293l-4.7 1" fill="none" stroke="#b4b5c2" stroke-width="2.2" stroke-linecap="round" stroke-linejoin="round"/></svg></span></div></div><div class="row o b" style="top:307px"><div class="c" style="left:0px;width:31px;border-left:none"></div><div class="c" style="left:31px;width:100px"><span style="display:inline-block;vertical-align:top">VICTORI...</span><span style="position:absolute;right:7px;top:0;height:32px;line-height:34px"><span style="display:inline-block;vertical-align:middle;margin-left:5px;line-height:0"><svg width="16" height="14" viewBox="0 0 16 14" ><path d="M1.3 6.9 H3.6 L6 1.9 L10 11.5 L11.8 7.1 H14.7" fill="none" stroke="#8dbde0" stroke-width="1.35" stroke-linejoin="round" stroke-linecap="round"/></svg></span></span></div><div class="c" style="left:131px;width:100px"></div><div class="c" style="left:231px;width:100px">27 Aug</div><div class="c" style="left:331px;width:100px">La Paz<span style="display:inline-block;vertical-align:middle;margin-left:4px;line-height:0;position:relative;top:-2px"><svg width="18" height="18" viewBox="0 0 24 24"><g fill="none" stroke="#a9abbb" stroke-width="2" stroke-linecap="round" stroke-linejoin="round"><path d="M12 9v12m-8 -8a8 8 0 0 0 16 0m1 0h-2m-14 0h-2"/><circle cx="12" cy="6" r="3"/></g></svg></span></div><div class="c" style="left:431px;width:100px"></div><div class="c" style="left:531px;width:100px">NOPAC</div><div class="c" style="left:631px;width:100px"></div><div class="c" style="left:731px;width:100px"><span class="money">$94,640/day</span></div><div class="c" style="left:831px;width:100px"></div><div class="c" style="left:931px;width:100px"></div><div class="c" style="left:1031px;width:100px"></div><div class="c" style="left:1131px;width:100px"></div><div class="c" style="left:1231px;width:100px">SHIPFIX</div><div class="c" style="left:1331px;width:100px"><span style="position:absolute;right:5px;top:11px;line-height:0"><svg width="12" height="12" viewBox="0 0 24 24"><path d="M3 20l1.3 -3.9c-2.324 -3.437 -1.426 -7.872 2.1 -10.374c3.526 -2.501 8.59 -2.296 11.845 .48c3.255 2.777 3.695 7.266 1.029 10.501c-2.666 3.235 -7.615 4.215 -11.574 2.293l-4.7 1" fill="none" stroke="#b4b5c2" stroke-width="2.2" stroke-linecap="round" stroke-linejoin="round"/></svg></span></div><div class="c" style="left:1431px;width:100px"><span style="position:absolute;right:5px;top:11px;line-height:0"><svg width="12" height="12" viewBox="0 0 24 24"><path d="M3 20l1.3 -3.9c-2.324 -3.437 -1.426 -7.872 2.1 -10.374c3.526 -2.501 8.59 -2.296 11.845 .48c3.255 2.777 3.695 7.266 1.029 10.501c-2.666 3.235 -7.615 4.215 -11.574 2.293l-4.7 1" fill="none" stroke="#b4b5c2" stroke-width="2.2" stroke-linecap="round" stroke-linejoin="round"/></svg></span></div></div><div class="row o b" style="top:340px"><div class="c" style="left:0px;width:31px;border-left:none"></div><div class="c" style="left:31px;width:100px"><span style="display:inline-block;vertical-align:top">ARETH...</span><span style="position:absolute;right:7px;top:0;height:32px;line-height:34px"><span style="display:inline-block;vertical-align:middle;margin-left:5px;line-height:0"><svg width="16" height="14" viewBox="0 0 16 14" ><path d="M1.3 6.9 H3.6 L6 1.9 L10 11.5 L11.8 7.1 H14.7" fill="none" stroke="#8dbde0" stroke-width="1.35" stroke-linejoin="round" stroke-linecap="round"/></svg></span></span></div><div class="c" style="left:131px;width:100px"></div><div class="c" style="left:231px;width:100px">27 Aug</div><div class="c" style="left:331px;width:100px">Huizhou<span style="display:inline-block;vertical-align:middle;margin-left:4px;line-height:0;position:relative;top:-2px"><svg width="18" height="18" viewBox="0 0 24 24"><g fill="none" stroke="#a9abbb" stroke-width="2" stroke-linecap="round" stroke-linejoin="round"><path d="M12 9v12m-8 -8a8 8 0 0 0 16 0m1 0h-2m-14 0h-2"/><circle cx="12" cy="6" r="3"/></g></svg></span></div><div class="c" style="left:431px;width:100px"></div><div class="c" style="left:531px;width:100px">NOPAC</div><div class="c" style="left:631px;width:100px"></div><div class="c" style="left:731px;width:100px"><span class="money">$60,962/day</span></div><div class="c" style="left:831px;width:100px"></div><div class="c" style="left:931px;width:100px"></div><div class="c" style="left:1031px;width:100px"></div><div class="c" style="left:1131px;width:100px"></div><div class="c" style="left:1231px;width:100px">SHIPFIX</div><div class="c" style="left:1331px;width:100px"><span style="position:absolute;right:5px;top:11px;line-height:0"><svg width="12" height="12" viewBox="0 0 24 24"><path d="M3 20l1.3 -3.9c-2.324 -3.437 -1.426 -7.872 2.1 -10.374c3.526 -2.501 8.59 -2.296 11.845 .48c3.255 2.777 3.695 7.266 1.029 10.501c-2.666 3.235 -7.615 4.215 -11.574 2.293l-4.7 1" fill="none" stroke="#b4b5c2" stroke-width="2.2" stroke-linecap="round" stroke-linejoin="round"/></svg></span></div><div class="c" style="left:1431px;width:100px"><span style="position:absolute;right:5px;top:11px;line-height:0"><svg width="12" height="12" viewBox="0 0 24 24"><path d="M3 20l1.3 -3.9c-2.324 -3.437 -1.426 -7.872 2.1 -10.374c3.526 -2.501 8.59 -2.296 11.845 .48c3.255 2.777 3.695 7.266 1.029 10.501c-2.666 3.235 -7.615 4.215 -11.574 2.293l-4.7 1" fill="none" stroke="#b4b5c2" stroke-width="2.2" stroke-linecap="round" stroke-linejoin="round"/></svg></span></div></div><div class="row o b" style="top:373px"><div class="c" style="left:0px;width:31px;border-left:none"></div><div class="c" style="left:31px;width:100px"><span style="display:inline-block;vertical-align:top">CAROLI...</span><span style="position:absolute;right:7px;top:0;height:32px;line-height:34px"><span style="display:inline-block;vertical-align:middle;margin-left:5px;line-height:0"><svg width="16" height="14" viewBox="0 0 16 14" ><path d="M1.3 6.9 H3.6 L6 1.9 L10 11.5 L11.8 7.1 H14.7" fill="none" stroke="#8dbde0" stroke-width="1.35" stroke-linejoin="round" stroke-linecap="round"/></svg></span></span></div><div class="c" style="left:131px;width:100px"></div><div class="c" style="left:231px;width:100px">29 Aug</div><div class="c" style="left:331px;width:100px">Portsmouth (UK)</div><div class="c" style="left:431px;width:100px"></div><div class="c" style="left:531px;width:100px">NOPAC</div><div class="c" style="left:631px;width:100px"></div><div class="c" style="left:731px;width:100px"><span class="money">$69,632/day</span></div><div class="c" style="left:831px;width:100px"></div><div class="c" style="left:931px;width:100px"></div><div class="c" style="left:1031px;width:100px"></div><div class="c" style="left:1131px;width:100px">ABT / PHO...</div><div class="c" style="left:1231px;width:100px">SHIPFIX</div><div class="c" style="left:1331px;width:100px"><span style="position:absolute;right:5px;top:11px;line-height:0"><svg width="12" height="12" viewBox="0 0 24 24"><path d="M3 20l1.3 -3.9c-2.324 -3.437 -1.426 -7.872 2.1 -10.374c3.526 -2.501 8.59 -2.296 11.845 .48c3.255 2.777 3.695 7.266 1.029 10.501c-2.666 3.235 -7.615 4.215 -11.574 2.293l-4.7 1" fill="none" stroke="#b4b5c2" stroke-width="2.2" stroke-linecap="round" stroke-linejoin="round"/></svg></span></div><div class="c" style="left:1431px;width:100px"><span style="position:absolute;right:5px;top:11px;line-height:0"><svg width="12" height="12" viewBox="0 0 24 24"><path d="M3 20l1.3 -3.9c-2.324 -3.437 -1.426 -7.872 2.1 -10.374c3.526 -2.501 8.59 -2.296 11.845 .48c3.255 2.777 3.695 7.266 1.029 10.501c-2.666 3.235 -7.615 4.215 -11.574 2.293l-4.7 1" fill="none" stroke="#b4b5c2" stroke-width="2.2" stroke-linecap="round" stroke-linejoin="round"/></svg></span></div></div><div class="row o b" style="top:406px"><div class="c" style="left:0px;width:31px;border-left:none"></div><div class="c" style="left:31px;width:100px"><span style="display:inline-block;vertical-align:top">ANNA-T...</span><span style="position:absolute;right:7px;top:0;height:32px;line-height:34px"><span style="display:inline-block;vertical-align:middle;margin-left:5px;line-height:0"><svg width="16" height="14" viewBox="0 0 16 14" ><path d="M1.3 6.9 H3.6 L6 1.9 L10 11.5 L11.8 7.1 H14.7" fill="none" stroke="#8dbde0" stroke-width="1.35" stroke-linejoin="round" stroke-linecap="round"/></svg></span></span></div><div class="c" style="left:131px;width:100px"></div><div class="c" style="left:231px;width:100px">29 Aug</div><div class="c" style="left:331px;width:100px">FSO PM-3 CAA</div><div class="c" style="left:431px;width:100px"></div><div class="c" style="left:531px;width:100px">NOPAC</div><div class="c" style="left:631px;width:100px"></div><div class="c" style="left:731px;width:100px"><span class="money">$68,136/day</span></div><div class="c" style="left:831px;width:100px"></div><div class="c" style="left:931px;width:100px"></div><div class="c" style="left:1031px;width:100px"></div><div class="c" style="left:1131px;width:100px"></div><div class="c" style="left:1231px;width:100px">SHIPFIX</div><div class="c" style="left:1331px;width:100px"><span style="position:absolute;right:5px;top:11px;line-height:0"><svg width="12" height="12" viewBox="0 0 24 24"><path d="M3 20l1.3 -3.9c-2.324 -3.437 -1.426 -7.872 2.1 -10.374c3.526 -2.501 8.59 -2.296 11.845 .48c3.255 2.777 3.695 7.266 1.029 10.501c-2.666 3.235 -7.615 4.215 -11.574 2.293l-4.7 1" fill="none" stroke="#b4b5c2" stroke-width="2.2" stroke-linecap="round" stroke-linejoin="round"/></svg></span></div><div class="c" style="left:1431px;width:100px"><span style="position:absolute;right:5px;top:11px;line-height:0"><svg width="12" height="12" viewBox="0 0 24 24"><path d="M3 20l1.3 -3.9c-2.324 -3.437 -1.426 -7.872 2.1 -10.374c3.526 -2.501 8.59 -2.296 11.845 .48c3.255 2.777 3.695 7.266 1.029 10.501c-2.666 3.235 -7.615 4.215 -11.574 2.293l-4.7 1" fill="none" stroke="#b4b5c2" stroke-width="2.2" stroke-linecap="round" stroke-linejoin="round"/></svg></span></div></div><div class="row k b" style="top:439px"><div class="c" style="left:0px;width:31px;border-left:none"></div><div class="c" style="left:31px;width:100px">CL LINDY<span style="display:inline-block;vertical-align:middle;margin-left:6px;line-height:0"><svg width="16" height="14" viewBox="0 0 16 14" ><path d="M1.3 6.9 H3.6 L6 1.9 L10 11.5 L11.8 7.1 H14.7" fill="none" stroke="#8dbde0" stroke-width="1.35" stroke-linejoin="round" stroke-linecap="round"/></svg></span></div><div class="c" style="left:131px;width:100px"></div><div class="c" style="left:231px;width:100px">02 Sep</div><div class="c" style="left:331px;width:100px">Yangpu<span style="display:inline-block;vertical-align:middle;margin-left:4px;line-height:0;position:relative;top:-2px"><svg width="18" height="18" viewBox="0 0 24 24"><g fill="none" stroke="#a9abbb" stroke-width="2" stroke-linecap="round" stroke-linejoin="round"><path d="M12 9v12m-8 -8a8 8 0 0 0 16 0m1 0h-2m-14 0h-2"/><circle cx="12" cy="6" r="3"/></g></svg></span></div><div class="c" style="left:431px;width:100px">ECSA</div><div class="c" style="left:531px;width:100px"></div><div class="c" style="left:631px;width:100px">CHARCOAL</div><div class="c" style="left:731px;width:100px"><span class="money">$41,191/day</span></div><div class="c" style="left:831px;width:100px"></div><div class="c" style="left:931px;width:100px"></div><div class="c" style="left:1031px;width:100px"></div><div class="c" style="left:1131px;width:100px"></div><div class="c" style="left:1231px;width:100px">SHIPFIX</div><div class="c" style="left:1331px;width:100px"><span style="position:absolute;right:5px;top:11px;line-height:0"><svg width="12" height="12" viewBox="0 0 24 24"><path d="M3 20l1.3 -3.9c-2.324 -3.437 -1.426 -7.872 2.1 -10.374c3.526 -2.501 8.59 -2.296 11.845 .48c3.255 2.777 3.695 7.266 1.029 10.501c-2.666 3.235 -7.615 4.215 -11.574 2.293l-4.7 1" fill="none" stroke="#b4b5c2" stroke-width="2.2" stroke-linecap="round" stroke-linejoin="round"/></svg></span></div><div class="c" style="left:1431px;width:100px"><span style="position:absolute;right:5px;top:11px;line-height:0"><svg width="12" height="12" viewBox="0 0 24 24"><path d="M3 20l1.3 -3.9c-2.324 -3.437 -1.426 -7.872 2.1 -10.374c3.526 -2.501 8.59 -2.296 11.845 .48c3.255 2.777 3.695 7.266 1.029 10.501c-2.666 3.235 -7.615 4.215 -11.574 2.293l-4.7 1" fill="none" stroke="#b4b5c2" stroke-width="2.2" stroke-linecap="round" stroke-linejoin="round"/></svg></span></div></div><div class="row k b" style="top:472px"><div class="c" style="left:0px;width:31px;border-left:none"></div><div class="c" style="left:31px;width:100px"><span style="display:inline-block;vertical-align:top">WINNIN...</span><span style="position:absolute;right:7px;top:0;height:32px;line-height:34px"><span style="display:inline-block;vertical-align:middle;color:#9a9eb4;font-size:11px;font-weight:400;line-height:12px;position:relative;top:-1px"><svg width="12" height="12" viewBox="0 0 24 24" style="vertical-align:middle"><path d="M3 20l1.3 -3.9c-2.324 -3.437 -1.426 -7.872 2.1 -10.374c3.526 -2.501 8.59 -2.296 11.845 .48c3.255 2.777 3.695 7.266 1.029 10.501c-2.666 3.235 -7.615 4.215 -11.574 2.293l-4.7 1" fill="none" stroke="#bdbcc6" stroke-width="2.2" stroke-linecap="round" stroke-linejoin="round"/></svg><span style="vertical-align:middle;margin-left:2px">1</span></span></span></div><div class="c" style="left:131px;width:100px"></div><div class="c" style="left:231px;width:100px">28 Aug</div><div class="c" style="left:331px;width:100px">Ridham Dock<span style="display:inline-block;vertical-align:middle;margin-left:4px;line-height:0;position:relative;top:-2px"><svg width="18" height="18" viewBox="0 0 24 24"><g fill="none" stroke="#a9abbb" stroke-width="2" stroke-linecap="round" stroke-linejoin="round"><path d="M12 9v12m-8 -8a8 8 0 0 0 16 0m1 0h-2m-14 0h-2"/><circle cx="12" cy="6" r="3"/></g></svg></span></div><div class="c" style="left:431px;width:100px">ECSA</div><div class="c" style="left:531px;width:100px"></div><div class="c" style="left:631px;width:100px">TALC</div><div class="c" style="left:731px;width:100px"><span class="money">$97,558/day</span></div><div class="c" style="left:831px;width:100px"></div><div class="c" style="left:931px;width:100px"></div><div class="c" style="left:1031px;width:100px"></div><div class="c" style="left:1131px;width:100px"></div><div class="c" style="left:1231px;width:100px">SHIPFIX</div><div class="c" style="left:1331px;width:100px"><span style="position:absolute;right:5px;top:11px;line-height:0"><svg width="12" height="12" viewBox="0 0 24 24"><path d="M3 20l1.3 -3.9c-2.324 -3.437 -1.426 -7.872 2.1 -10.374c3.526 -2.501 8.59 -2.296 11.845 .48c3.255 2.777 3.695 7.266 1.029 10.501c-2.666 3.235 -7.615 4.215 -11.574 2.293l-4.7 1" fill="none" stroke="#b4b5c2" stroke-width="2.2" stroke-linecap="round" stroke-linejoin="round"/></svg></span></div><div class="c" style="left:1431px;width:100px"><span style="position:absolute;right:5px;top:11px;line-height:0"><svg width="12" height="12" viewBox="0 0 24 24"><path d="M3 20l1.3 -3.9c-2.324 -3.437 -1.426 -7.872 2.1 -10.374c3.526 -2.501 8.59 -2.296 11.845 .48c3.255 2.777 3.695 7.266 1.029 10.501c-2.666 3.235 -7.615 4.215 -11.574 2.293l-4.7 1" fill="none" stroke="#b4b5c2" stroke-width="2.2" stroke-linecap="round" stroke-linejoin="round"/></svg></span></div></div><div class="row o b" style="top:505px"><div class="c" style="left:0px;width:31px;border-left:none"></div><div class="c" style="left:31px;width:100px"><span style="display:inline-block;vertical-align:top">PELORE...</span><span style="position:absolute;right:7px;top:0;height:32px;line-height:34px"><span style="display:inline-block;vertical-align:middle;margin-left:5px;line-height:0"><svg width="16" height="14" viewBox="0 0 16 14" ><path d="M1.3 6.9 H3.6 L6 1.9 L10 11.5 L11.8 7.1 H14.7" fill="none" stroke="#8dbde0" stroke-width="1.35" stroke-linejoin="round" stroke-linecap="round"/></svg></span></span></div><div class="c" style="left:131px;width:100px"></div><div class="c" style="left:231px;width:100px">30 Aug</div><div class="c" style="left:331px;width:100px">NOPAC</div><div class="c" style="left:431px;width:100px"></div><div class="c" style="left:531px;width:100px"></div><div class="c" style="left:631px;width:100px"></div><div class="c" style="left:731px;width:100px"><span class="money">$39,570/day</span></div><div class="c" style="left:831px;width:100px"></div><div class="c" style="left:931px;width:100px"></div><div class="c" style="left:1031px;width:100px"></div><div class="c" style="left:1131px;width:100px"></div><div class="c" style="left:1231px;width:100px">SHIPFIX</div><div class="c" style="left:1331px;width:100px"><span style="position:absolute;right:5px;top:11px;line-height:0"><svg width="12" height="12" viewBox="0 0 24 24"><path d="M3 20l1.3 -3.9c-2.324 -3.437 -1.426 -7.872 2.1 -10.374c3.526 -2.501 8.59 -2.296 11.845 .48c3.255 2.777 3.695 7.266 1.029 10.501c-2.666 3.235 -7.615 4.215 -11.574 2.293l-4.7 1" fill="none" stroke="#b4b5c2" stroke-width="2.2" stroke-linecap="round" stroke-linejoin="round"/></svg></span></div><div class="c" style="left:1431px;width:100px"><span style="position:absolute;right:5px;top:11px;line-height:0"><svg width="12" height="12" viewBox="0 0 24 24"><path d="M3 20l1.3 -3.9c-2.324 -3.437 -1.426 -7.872 2.1 -10.374c3.526 -2.501 8.59 -2.296 11.845 .48c3.255 2.777 3.695 7.266 1.029 10.501c-2.666 3.235 -7.615 4.215 -11.574 2.293l-4.7 1" fill="none" stroke="#b4b5c2" stroke-width="2.2" stroke-linecap="round" stroke-linejoin="round"/></svg></span></div></div><div class="row o b" style="top:538px"><div class="c" style="left:0px;width:31px;border-left:none"></div><div class="c" style="left:31px;width:100px"><span style="display:inline-block;vertical-align:top">NAV...</span><span style="position:absolute;right:7px;top:0;height:32px;line-height:34px"><span style="display:inline-block;vertical-align:middle;color:#9a9eb4;font-size:11px;font-weight:400;line-height:12px;position:relative;top:-1px"><svg width="12" height="12" viewBox="0 0 24 24" style="vertical-align:middle"><path d="M3 20l1.3 -3.9c-2.324 -3.437 -1.426 -7.872 2.1 -10.374c3.526 -2.501 8.59 -2.296 11.845 .48c3.255 2.777 3.695 7.266 1.029 10.501c-2.666 3.235 -7.615 4.215 -11.574 2.293l-4.7 1" fill="none" stroke="#bdbcc6" stroke-width="2.2" stroke-linecap="round" stroke-linejoin="round"/></svg><span style="vertical-align:middle;margin-left:2px">1</span></span><span style="display:inline-block;vertical-align:middle;margin-left:5px;line-height:0"><svg width="16" height="14" viewBox="0 0 16 14" ><path d="M1.3 6.9 H3.6 L6 1.9 L10 11.5 L11.8 7.1 H14.7" fill="none" stroke="#8dbde0" stroke-width="1.35" stroke-linejoin="round" stroke-linecap="round"/></svg></span></span></div><div class="c" style="left:131px;width:100px"></div><div class="c" style="left:231px;width:100px">24 Aug</div><div class="c" style="left:331px;width:100px">Mar del Plata<span style="display:inline-block;vertical-align:middle;margin-left:4px;line-height:0;position:relative;top:-2px"><svg width="18" height="18" viewBox="0 0 24 24"><g fill="none" stroke="#a9abbb" stroke-width="2" stroke-linecap="round" stroke-linejoin="round"><path d="M12 9v12m-8 -8a8 8 0 0 0 16 0m1 0h-2m-14 0h-2"/><circle cx="12" cy="6" r="3"/></g></svg></span></div><div class="c" style="left:431px;width:100px"></div><div class="c" style="left:531px;width:100px">NOPAC</div><div class="c" style="left:631px;width:100px"></div><div class="c" style="left:731px;width:100px"><span class="money">$30,600/day</span></div><div class="c" style="left:831px;width:100px"></div><div class="c" style="left:931px;width:100px"></div><div class="c" style="left:1031px;width:100px"></div><div class="c" style="left:1131px;width:100px"></div><div class="c" style="left:1231px;width:100px">SHIPFIX</div><div class="c" style="left:1331px;width:100px"><span style="position:absolute;right:5px;top:11px;line-height:0"><svg width="12" height="12" viewBox="0 0 24 24"><path d="M3 20l1.3 -3.9c-2.324 -3.437 -1.426 -7.872 2.1 -10.374c3.526 -2.501 8.59 -2.296 11.845 .48c3.255 2.777 3.695 7.266 1.029 10.501c-2.666 3.235 -7.615 4.215 -11.574 2.293l-4.7 1" fill="none" stroke="#b4b5c2" stroke-width="2.2" stroke-linecap="round" stroke-linejoin="round"/></svg></span></div><div class="c" style="left:1431px;width:100px"><span style="position:absolute;right:5px;top:11px;line-height:0"><svg width="12" height="12" viewBox="0 0 24 24"><path d="M3 20l1.3 -3.9c-2.324 -3.437 -1.426 -7.872 2.1 -10.374c3.526 -2.501 8.59 -2.296 11.845 .48c3.255 2.777 3.695 7.266 1.029 10.501c-2.666 3.235 -7.615 4.215 -11.574 2.293l-4.7 1" fill="none" stroke="#b4b5c2" stroke-width="2.2" stroke-linecap="round" stroke-linejoin="round"/></svg></span></div></div><div class="row o b" style="top:571px"><div class="c" style="left:0px;width:31px;border-left:none"></div><div class="c" style="left:31px;width:100px">KONTA I</div><div class="c" style="left:131px;width:100px"></div><div class="c" style="left:231px;width:100px">27 Aug</div><div class="c" style="left:331px;width:100px">Sri Lanka</div><div class="c" style="left:431px;width:100px"></div><div class="c" style="left:531px;width:100px">NOPAC</div><div class="c" style="left:631px;width:100px"></div><div class="c" style="left:731px;width:100px"><span class="money">$65,455/day</span></div><div class="c" style="left:831px;width:100px"></div><div class="c" style="left:931px;width:100px"></div><div class="c" style="left:1031px;width:100px"></div><div class="c" style="left:1131px;width:100px"></div><div class="c" style="left:1231px;width:100px">SHIPFIX</div><div class="c" style="left:1331px;width:100px"><span style="position:absolute;right:5px;top:11px;line-height:0"><svg width="12" height="12" viewBox="0 0 24 24"><path d="M3 20l1.3 -3.9c-2.324 -3.437 -1.426 -7.872 2.1 -10.374c3.526 -2.501 8.59 -2.296 11.845 .48c3.255 2.777 3.695 7.266 1.029 10.501c-2.666 3.235 -7.615 4.215 -11.574 2.293l-4.7 1" fill="none" stroke="#b4b5c2" stroke-width="2.2" stroke-linecap="round" stroke-linejoin="round"/></svg></span></div><div class="c" style="left:1431px;width:100px"><span style="position:absolute;right:5px;top:11px;line-height:0"><svg width="12" height="12" viewBox="0 0 24 24"><path d="M3 20l1.3 -3.9c-2.324 -3.437 -1.426 -7.872 2.1 -10.374c3.526 -2.501 8.59 -2.296 11.845 .48c3.255 2.777 3.695 7.266 1.029 10.501c-2.666 3.235 -7.615 4.215 -11.574 2.293l-4.7 1" fill="none" stroke="#b4b5c2" stroke-width="2.2" stroke-linecap="round" stroke-linejoin="round"/></svg></span></div></div><div class="row k b" style="top:604px"><div class="c" style="left:0px;width:31px;border-left:none"></div><div class="c" style="left:31px;width:100px">DZ HEZE<span style="display:inline-block;vertical-align:middle;margin-left:6px;line-height:0"><svg width="16" height="14" viewBox="0 0 16 14" ><path d="M1.3 6.9 H3.6 L6 1.9 L10 11.5 L11.8 7.1 H14.7" fill="none" stroke="#8dbde0" stroke-width="1.35" stroke-linejoin="round" stroke-linecap="round"/></svg></span></div><div class="c" style="left:131px;width:100px"></div><div class="c" style="left:231px;width:100px">31 Aug</div><div class="c" style="left:331px;width:100px">Karwar<span style="display:inline-block;vertical-align:middle;margin-left:4px;line-height:0;position:relative;top:-2px"><svg width="18" height="18" viewBox="0 0 24 24"><g fill="none" stroke="#a9abbb" stroke-width="2" stroke-linecap="round" stroke-linejoin="round"><path d="M12 9v12m-8 -8a8 8 0 0 0 16 0m1 0h-2m-14 0h-2"/><circle cx="12" cy="6" r="3"/></g></svg></span></div><div class="c" style="left:431px;width:100px">ECSA</div><div class="c" style="left:531px;width:100px"></div><div class="c" style="left:631px;width:100px">STEAM COAL</div><div class="c" style="left:731px;width:100px"><span class="money">$37,318/day</span></div><div class="c" style="left:831px;width:100px"></div><div class="c" style="left:931px;width:100px"></div><div class="c" style="left:1031px;width:100px"></div><div class="c" style="left:1131px;width:100px"></div><div class="c" style="left:1231px;width:100px">SHIPFIX</div><div class="c" style="left:1331px;width:100px"><span style="position:absolute;right:5px;top:11px;line-height:0"><svg width="12" height="12" viewBox="0 0 24 24"><path d="M3 20l1.3 -3.9c-2.324 -3.437 -1.426 -7.872 2.1 -10.374c3.526 -2.501 8.59 -2.296 11.845 .48c3.255 2.777 3.695 7.266 1.029 10.501c-2.666 3.235 -7.615 4.215 -11.574 2.293l-4.7 1" fill="none" stroke="#b4b5c2" stroke-width="2.2" stroke-linecap="round" stroke-linejoin="round"/></svg></span></div><div class="c" style="left:1431px;width:100px"><span style="position:absolute;right:5px;top:11px;line-height:0"><svg width="12" height="12" viewBox="0 0 24 24"><path d="M3 20l1.3 -3.9c-2.324 -3.437 -1.426 -7.872 2.1 -10.374c3.526 -2.501 8.59 -2.296 11.845 .48c3.255 2.777 3.695 7.266 1.029 10.501c-2.666 3.235 -7.615 4.215 -11.574 2.293l-4.7 1" fill="none" stroke="#b4b5c2" stroke-width="2.2" stroke-linecap="round" stroke-linejoin="round"/></svg></span></div></div><div class="row o b" style="top:637px"><div class="c" style="left:0px;width:31px;border-left:none"></div><div class="c" style="left:31px;width:100px"><span style="display:inline-block;vertical-align:top">ARKLOW V...</span></div><div class="c" style="left:131px;width:100px"></div><div class="c" style="left:231px;width:100px">23 Aug</div><div class="c" style="left:331px;width:100px">Conchan<span style="display:inline-block;vertical-align:middle;margin-left:4px;line-height:0;position:relative;top:-2px"><svg width="18" height="18" viewBox="0 0 24 24"><g fill="none" stroke="#a9abbb" stroke-width="2" stroke-linecap="round" stroke-linejoin="round"><path d="M12 9v12m-8 -8a8 8 0 0 0 16 0m1 0h-2m-14 0h-2"/><circle cx="12" cy="6" r="3"/></g></svg></span></div><div class="c" style="left:431px;width:100px"></div><div class="c" style="left:531px;width:100px">NOPAC</div><div class="c" style="left:631px;width:100px"></div><div class="c" style="left:731px;width:100px"><span class="money">$72,470/day</span></div><div class="c" style="left:831px;width:100px"></div><div class="c" style="left:931px;width:100px"></div><div class="c" style="left:1031px;width:100px"></div><div class="c" style="left:1131px;width:100px"></div><div class="c" style="left:1231px;width:100px">SHIPFIX</div><div class="c" style="left:1331px;width:100px"><span style="position:absolute;right:5px;top:11px;line-height:0"><svg width="12" height="12" viewBox="0 0 24 24"><path d="M3 20l1.3 -3.9c-2.324 -3.437 -1.426 -7.872 2.1 -10.374c3.526 -2.501 8.59 -2.296 11.845 .48c3.255 2.777 3.695 7.266 1.029 10.501c-2.666 3.235 -7.615 4.215 -11.574 2.293l-4.7 1" fill="none" stroke="#b4b5c2" stroke-width="2.2" stroke-linecap="round" stroke-linejoin="round"/></svg></span></div><div class="c" style="left:1431px;width:100px"><span style="position:absolute;right:5px;top:11px;line-height:0"><svg width="12" height="12" viewBox="0 0 24 24"><path d="M3 20l1.3 -3.9c-2.324 -3.437 -1.426 -7.872 2.1 -10.374c3.526 -2.501 8.59 -2.296 11.845 .48c3.255 2.777 3.695 7.266 1.029 10.501c-2.666 3.235 -7.615 4.215 -11.574 2.293l-4.7 1" fill="none" stroke="#b4b5c2" stroke-width="2.2" stroke-linecap="round" stroke-linejoin="round"/></svg></span></div></div><div class="row k b" style="top:670px"><div class="c" style="left:0px;width:31px;border-left:none"></div><div class="c" style="left:31px;width:100px">RUN DE</div><div class="c" style="left:131px;width:100px"></div><div class="c" style="left:231px;width:100px">02 Sep</div><div class="c" style="left:331px;width:100px">Higashi-Harima</div><div class="c" style="left:431px;width:100px">ECSA</div><div class="c" style="left:531px;width:100px"></div><div class="c" style="left:631px;width:100px">FERTILIZERS</div><div class="c" style="left:731px;width:100px"><span class="money">$32,783/day</span></div><div class="c" style="left:831px;width:100px"></div><div class="c" style="left:931px;width:100px"></div><div class="c" style="left:1031px;width:100px"></div><div class="c" style="left:1131px;width:100px"></div><div class="c" style="left:1231px;width:100px">SHIPFIX</div><div class="c" style="left:1331px;width:100px"><span style="position:absolute;right:5px;top:11px;line-height:0"><svg width="12" height="12" viewBox="0 0 24 24"><path d="M3 20l1.3 -3.9c-2.324 -3.437 -1.426 -7.872 2.1 -10.374c3.526 -2.501 8.59 -2.296 11.845 .48c3.255 2.777 3.695 7.266 1.029 10.501c-2.666 3.235 -7.615 4.215 -11.574 2.293l-4.7 1" fill="none" stroke="#b4b5c2" stroke-width="2.2" stroke-linecap="round" stroke-linejoin="round"/></svg></span></div><div class="c" style="left:1431px;width:100px"><span style="position:absolute;right:5px;top:11px;line-height:0"><svg width="12" height="12" viewBox="0 0 24 24"><path d="M3 20l1.3 -3.9c-2.324 -3.437 -1.426 -7.872 2.1 -10.374c3.526 -2.501 8.59 -2.296 11.845 .48c3.255 2.777 3.695 7.266 1.029 10.501c-2.666 3.235 -7.615 4.215 -11.574 2.293l-4.7 1" fill="none" stroke="#b4b5c2" stroke-width="2.2" stroke-linecap="round" stroke-linejoin="round"/></svg></span></div></div><div class="row o b" style="top:703px"><div class="c" style="left:0px;width:31px;border-left:none"></div><div class="c" style="left:31px;width:100px"><span style="display:inline-block;vertical-align:top">MALLIK...</span><span style="position:absolute;right:7px;top:0;height:32px;line-height:34px"><span style="display:inline-block;vertical-align:middle;margin-left:5px;line-height:0"><svg width="16" height="14" viewBox="0 0 16 14" ><path d="M1.3 6.9 H3.6 L6 1.9 L10 11.5 L11.8 7.1 H14.7" fill="none" stroke="#8dbde0" stroke-width="1.35" stroke-linejoin="round" stroke-linecap="round"/></svg></span></span></div><div class="c" style="left:131px;width:100px"></div><div class="c" style="left:231px;width:100px">01 Sep</div><div class="c" style="left:331px;width:100px">Koverhar<span style="display:inline-block;vertical-align:middle;margin-left:4px;line-height:0;position:relative;top:-2px"><svg width="18" height="18" viewBox="0 0 24 24"><g fill="none" stroke="#a9abbb" stroke-width="2" stroke-linecap="round" stroke-linejoin="round"><path d="M12 9v12m-8 -8a8 8 0 0 0 16 0m1 0h-2m-14 0h-2"/><circle cx="12" cy="6" r="3"/></g></svg></span></div><div class="c" style="left:431px;width:100px"></div><div class="c" style="left:531px;width:100px">NOPAC</div><div class="c" style="left:631px;width:100px"></div><div class="c" style="left:731px;width:100px"><span class="money">$40,823/day</span></div><div class="c" style="left:831px;width:100px"></div><div class="c" style="left:931px;width:100px"></div><div class="c" style="left:1031px;width:100px"></div><div class="c" style="left:1131px;width:100px"></div><div class="c" style="left:1231px;width:100px">SHIPFIX</div><div class="c" style="left:1331px;width:100px"><span style="position:absolute;right:5px;top:11px;line-height:0"><svg width="12" height="12" viewBox="0 0 24 24"><path d="M3 20l1.3 -3.9c-2.324 -3.437 -1.426 -7.872 2.1 -10.374c3.526 -2.501 8.59 -2.296 11.845 .48c3.255 2.777 3.695 7.266 1.029 10.501c-2.666 3.235 -7.615 4.215 -11.574 2.293l-4.7 1" fill="none" stroke="#b4b5c2" stroke-width="2.2" stroke-linecap="round" stroke-linejoin="round"/></svg></span></div><div class="c" style="left:1431px;width:100px"><span style="position:absolute;right:5px;top:11px;line-height:0"><svg width="12" height="12" viewBox="0 0 24 24"><path d="M3 20l1.3 -3.9c-2.324 -3.437 -1.426 -7.872 2.1 -10.374c3.526 -2.501 8.59 -2.296 11.845 .48c3.255 2.777 3.695 7.266 1.029 10.501c-2.666 3.235 -7.615 4.215 -11.574 2.293l-4.7 1" fill="none" stroke="#b4b5c2" stroke-width="2.2" stroke-linecap="round" stroke-linejoin="round"/></svg></span></div></div><div class="abs" style="left:0;top:0px;width:16px;height:736px;background:linear-gradient(90deg,rgba(110,110,130,0.09),rgba(110,110,130,0))"></div></div><div class="abs" style="left:1866px;top:100px;width:6px;height:333px;border-radius:3px;background:#808080"></div></body></html>
